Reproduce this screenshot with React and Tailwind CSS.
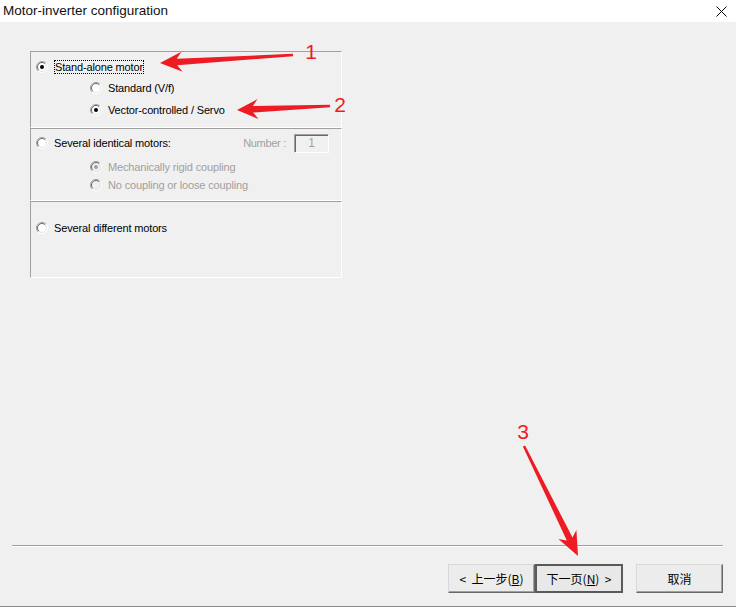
import React from 'react';

// classic sunken radio button
const Radio = ({ checked = false, disabled = false }) => (
  <svg width="12" height="12" viewBox="0 0 12 12" className="shrink-0">
    <circle cx="6" cy="6" r="5.5" fill={disabled ? '#f0f0f0' : '#ffffff'} />
    <path d="M2.1 9.9 A5.5 5.5 0 0 1 9.9 2.1" fill="none" stroke="#a0a0a0" strokeWidth="1" />
    <path d="M2.1 9.9 A5.5 5.5 0 0 0 9.9 2.1" fill="none" stroke="#ffffff" strokeWidth="1" />
    <path d="M2.8 9.2 A4.5 4.5 0 0 1 9.2 2.8" fill="none" stroke="#696969" strokeWidth="1" />
    <path d="M2.8 9.2 A4.5 4.5 0 0 0 9.2 2.8" fill="none" stroke="#e3e3e3" strokeWidth="1" />
    {checked && <circle cx="6" cy="6" r="2" fill={disabled ? '#a0a0a0' : '#000000'} />}
  </svg>
);

const arrowPoints = (tail, tip, headLen, headHalf, shaftTail, shaftHead) => {
  const dx = tip[0] - tail[0];
  const dy = tip[1] - tail[1];
  const len = Math.hypot(dx, dy);
  const ux = dx / len;
  const uy = dy / len;
  const nx = -uy;
  const ny = ux;
  const bx = tip[0] - ux * headLen;
  const by = tip[1] - uy * headLen;
  const nb = tip[0] - ux * (headLen - 5);
  const nby = tip[1] - uy * (headLen - 5);
  const pts = [
    [tail[0] + nx * shaftTail, tail[1] + ny * shaftTail],
    [nb + nx * shaftHead, nby + ny * shaftHead],
    [bx + nx * headHalf, by + ny * headHalf],
    tip,
    [bx - nx * headHalf, by - ny * headHalf],
    [nb - nx * shaftHead, nby - ny * shaftHead],
    [tail[0] - nx * shaftTail, tail[1] - ny * shaftTail],
  ];
  return pts.map((p) => `${p[0].toFixed(1)},${p[1].toFixed(1)}`).join(' ');
};

const Arrows = () => (
  <svg className="absolute left-0 top-0 pointer-events-none" width="736" height="607">
    <polygon points={arrowPoints([293, 55], [160, 63], 22, 10, 1.2, 3.2)} fill="#ed1c24" />
    <polygon points={arrowPoints([330, 106], [237, 110], 21, 10, 1.2, 3.2)} fill="#ed1c24" />
    <polygon points={arrowPoints([524, 446], [578, 556], 24, 10, 1.2, 3.2)} fill="#ed1c24" />
    <g fill="#ed1c24" fontFamily="'Liberation Sans', Arial, sans-serif" fontSize="21" textAnchor="middle">
      <text x="311" y="59">1</text>
      <text x="340" y="112">2</text>
      <text x="523" y="439">3</text>
    </g>
  </svg>
);

const Button = ({ children, isDefault }) => (
  <button
    type="button"
    className={
      isDefault
        ? 'h-[29px] w-[88px] bg-[#e8e8e8] border-2 border-[#5a5a5a] text-[12px] text-black flex items-center justify-center whitespace-pre'
        : 'h-[29px] w-[87px] bg-[#ececec] border border-[#d8d8d8] border-b-[#696969] border-r-[#696969] shadow-[inset_-1px_-1px_0_#a0a0a0] text-[12px] text-black flex items-center justify-center whitespace-pre'
    }
  >
    {children}
  </button>
);

export default function App() {
  return (
    <div
      className="relative w-[736px] h-[607px] overflow-hidden bg-[#f0f0f0] text-black"
      style={{ fontFamily: "'Liberation Sans', Arial, sans-serif" }}
    >
      {/* Title bar */}
      <div className="h-[22px] bg-white flex items-center justify-between pl-[3px] pr-[9px]">
        <span className="text-[13.5px] leading-none text-[#111]">Motor-inverter configuration</span>
        <svg width="11" height="11" viewBox="0 0 11 11">
          <path d="M0.5 0.5 L10.5 10.5 M10.5 0.5 L0.5 10.5" stroke="#000" strokeWidth="1" />
        </svg>
      </div>

      {/* Body */}
      <div className="h-[585px] flex flex-col border-b border-[#8a8a8a] text-[11px] tracking-[-0.15px]">
        <div className="mt-[29px] ml-[30px] w-[312px]">
          {/* Stand-alone */}
          <div className="h-[77px] border-l border-t border-[#a0a0a0] border-r border-r-white border-b border-b-white pl-[5px]">
            <div className="mt-[6px] h-[18px] flex items-center gap-[6px]">
              <Radio checked />
              <span className="border border-dotted border-black leading-[12px]">Stand-alone motor</span>
            </div>
            <div className="mt-[3px] h-[18px] flex items-center gap-[6px] pl-[54px]">
              <Radio />
              <span>Standard (V/f)</span>
            </div>
            <div className="mt-[4px] h-[18px] flex items-center gap-[6px] pl-[54px]">
              <Radio checked />
              <span>Vector-controlled / Servo</span>
            </div>
          </div>

          {/* Several identical */}
          <div className="h-[73px] border-l border-t border-[#a0a0a0] border-r border-r-white border-b border-b-white pl-[5px]">
            <div className="mt-[5px] h-[18px] flex items-center gap-[6px]">
              <Radio />
              <span>Several identical motors:</span>
              <span className="ml-auto text-[#a0a0a0] tracking-[-0.3px]">Number :</span>
              <div className="ml-[2px] mr-[12px] w-[35px] h-[19px] border border-[#a0a0a0] border-b-white border-r-white shadow-[inset_1px_1px_0_#696969] flex items-center justify-center text-[12px] text-[#a0a0a0]">
                1
              </div>
            </div>
            <div className="mt-[6px] h-[18px] flex items-center gap-[6px] pl-[54px] text-[#a0a0a0]">
              <Radio checked disabled />
              <span>Mechanically rigid coupling</span>
            </div>
            <div className="h-[18px] flex items-center gap-[6px] pl-[54px] text-[#a0a0a0]">
              <Radio disabled />
              <span>No coupling or loose coupling</span>
            </div>
          </div>

          {/* Several different */}
          <div className="h-[77px] border-l border-t border-[#a0a0a0] border-r border-r-white border-b border-b-white pl-[5px]">
            <div className="mt-[17px] h-[18px] flex items-center gap-[6px]">
              <Radio />
              <span>Several different motors</span>
            </div>
          </div>
        </div>

        <div className="mt-auto ml-[12px] w-[711px] h-[2px] border-t border-[#a0a0a0] border-b border-b-white" />

        <div
          className="mt-[17px] mb-[13px] flex justify-end pr-[13px] tracking-normal"
          style={{ fontFamily: "'Noto Sans CJK SC', 'Liberation Sans', sans-serif" }}
        >
          <Button>
            {'<  上一步('}<span className="underline">B</span>)
          </Button>
          <Button isDefault>
            下一页(<span className="underline">N</span>{')  >'}
          </Button>
          <div className="w-[13px]" />
          <Button>取消</Button>
        </div>
      </div>

      <Arrows />
    </div>
  );
}
